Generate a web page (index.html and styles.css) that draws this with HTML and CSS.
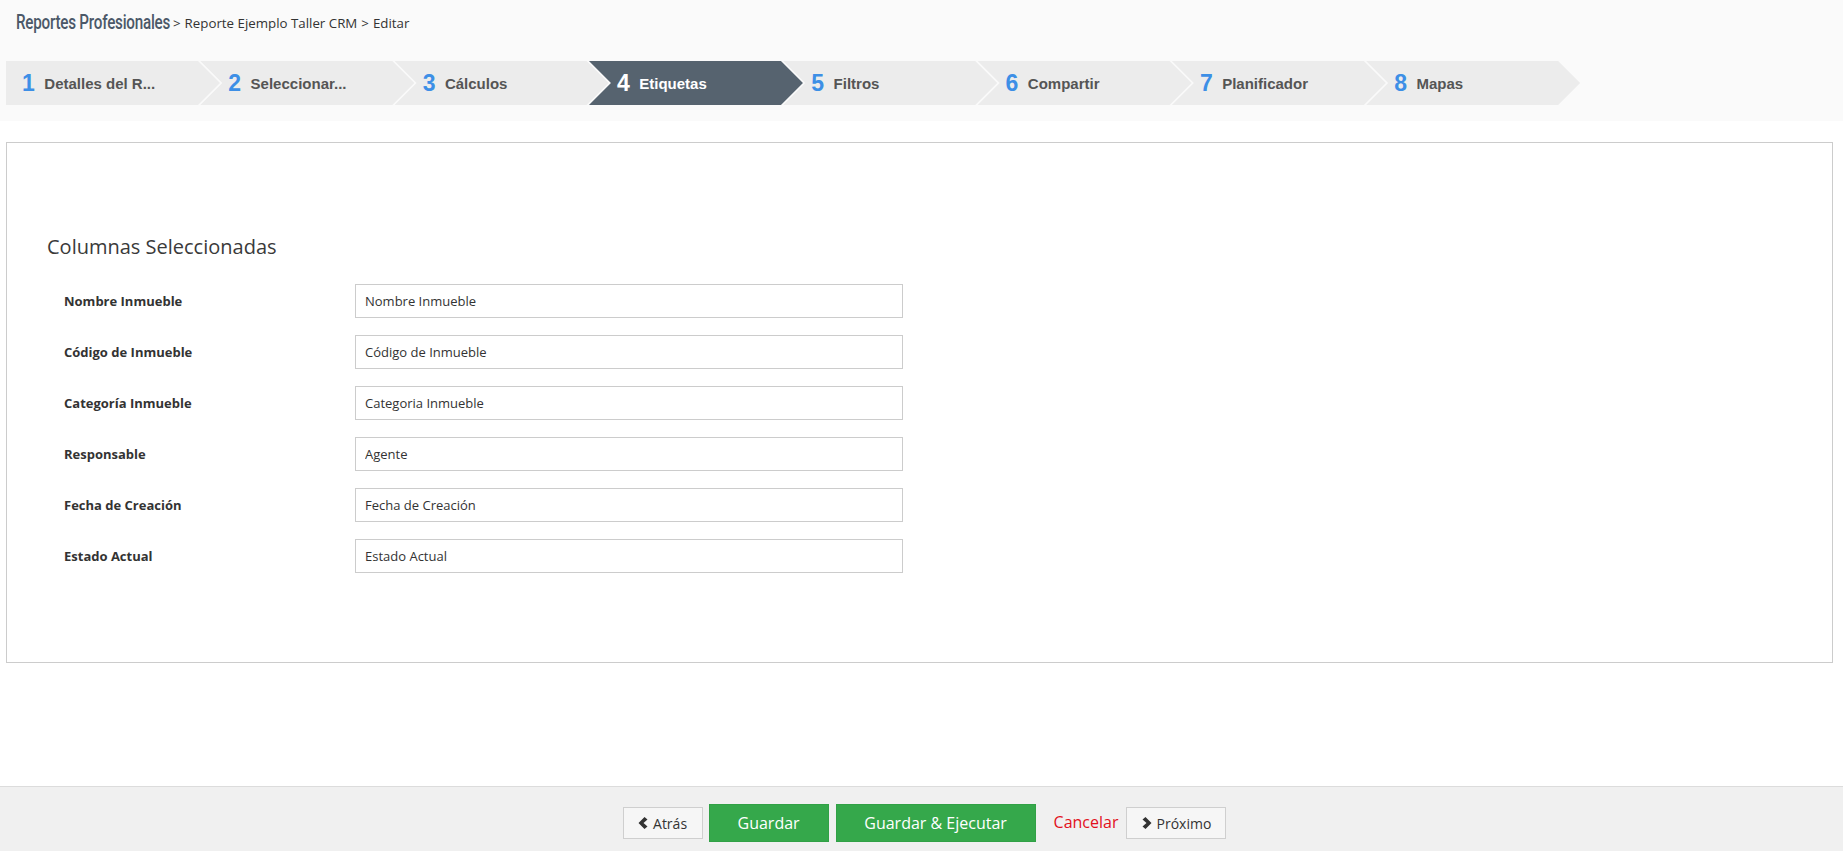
FILE: index.html
```html
<!DOCTYPE html>
<html lang="es">
<head>
<meta charset="utf-8">
<title>Reportes Profesionales - Editar</title>
<link rel="stylesheet" href="styles.css">
</head>
<body>
<div class="page">
  <header class="top">
    <nav class="crumbs">
      <span class="brand-box"><span class="brand">Reportes Profesionales</span></span>
      <span class="trail"><span class="sep">&gt;</span>Reporte Ejemplo Taller CRM<span class="sep">&gt;</span>Editar</span>
    </nav>
    <ol class="wizard">
      <li class="step first"><span class="num">1</span><span class="lbl">Detalles del R...</span></li>
      <li class="step"><span class="num">2</span><span class="lbl">Seleccionar...</span></li>
      <li class="step"><span class="num">3</span><span class="lbl">Cálculos</span></li>
      <li class="step active"><span class="num">4</span><span class="lbl">Etiquetas</span></li>
      <li class="step"><span class="num">5</span><span class="lbl">Filtros</span></li>
      <li class="step"><span class="num">6</span><span class="lbl">Compartir</span></li>
      <li class="step"><span class="num">7</span><span class="lbl">Planificador</span></li>
      <li class="step"><span class="num">8</span><span class="lbl">Mapas</span></li>
    </ol>
  </header>

  <main class="panel">
    <h2 class="title">Columnas Seleccionadas</h2>
    <div class="fields">
      <div class="field"><label>Nombre Inmueble</label><input type="text" value="Nombre Inmueble"></div>
      <div class="field"><label>Código de Inmueble</label><input type="text" value="Código de Inmueble"></div>
      <div class="field"><label>Categoría Inmueble</label><input type="text" value="Categoria Inmueble"></div>
      <div class="field"><label>Responsable</label><input type="text" value="Agente"></div>
      <div class="field"><label>Fecha de Creación</label><input type="text" value="Fecha de Creación"></div>
      <div class="field"><label>Estado Actual</label><input type="text" value="Estado Actual"></div>
    </div>
  </main>

  <footer class="actions">
    <div class="bar">
      <button class="btn btn-back"><svg class="chev" width="10" height="12" viewBox="0 0 10 12"><polygon points="6.5,0 9.5,2.5 5.5,6 9.5,9.5 6.5,12 0.5,6"/></svg>Atrás</button>
      <button class="btn btn-primary btn-save">Guardar</button>
      <button class="btn btn-primary btn-run">Guardar &amp; Ejecutar</button>
      <a class="cancel">Cancelar</a>
      <button class="btn btn-next"><svg class="chev" width="10" height="12" viewBox="0 0 10 12"><polygon points="3.5,0 0.5,2.5 4.5,6 0.5,9.5 3.5,12 9.5,6"/></svg>Próximo</button>
    </div>
  </footer>
</div>
</body>
</html>
```

FILE: styles.css
```css
html, body {
  margin: 0;
  padding: 0;
}

body {
  font-family: "Open Sans", "Liberation Sans", sans-serif;
  color: #333;
  background: #fff;
}

.page {
  display: flex;
  flex-direction: column;
  min-height: 100vh;
}

/* ---------- header ---------- */
.top {
  background: #fafafa;
  height: 121px;
  box-sizing: border-box;
  padding: 10px 0 0 6px;
}

.crumbs {
  display: flex;
  align-items: center;
  height: 24px;
  padding-left: 10px;
  font-size: 13.3px;
  color: #333;
}

.brand-box {
  display: block;
  width: 153px;
  height: 24px;
  flex: 0 0 153px;
}

.brand {
  display: inline-block;
  white-space: nowrap;
  font-family: Roboto, "Liberation Sans", sans-serif;
  font-size: 20px;
  line-height: 24px;
  font-weight: 500;
  color: #4b5868;
  letter-spacing: -0.3px;
  transform: scaleX(0.76);
  transform-origin: 0 50%;
}

.trail {
  line-height: 24px;
  padding-top: 2px;
  white-space: nowrap;
}

.sep {
  margin: 0 4px;
}

.wizard {
  list-style: none;
  margin: 27px 0 0;
  padding: 0;
  display: flex;
}

.step {
  flex: 0 0 214px;
  width: 214px;
  height: 44px;
  margin-right: -19.7px;
  box-sizing: border-box;
  padding-left: 28px;
  display: flex;
  align-items: center;
  background: #ececec;
  clip-path: polygon(0 0, calc(100% - 22px) 0, 100% 50%, calc(100% - 22px) 100%, 0 100%, 22px 50%);
  font-family: "Liberation Sans", Arial, sans-serif;
  font-weight: bold;
  white-space: nowrap;
}

.step.first {
  padding-left: 16px;
  clip-path: polygon(0 0, calc(100% - 22px) 0, 100% 50%, calc(100% - 22px) 100%, 0 100%);
}

.step.active {
  background: #56636f;
}

.num {
  font-size: 23px;
  color: #3d8fe6;
  margin-right: 9.5px;
}

.lbl {
  font-size: 15px;
  color: #555;
}

.step.active .num,
.step.active .lbl {
  color: #fff;
}

/* ---------- panel ---------- */
.panel {
  margin: 21px 10px 0 6px;
  border: 1px solid #cccccc;
  padding: 90px 40px 89px;
}

.title {
  margin: 0 0 23px;
  font-size: 20px;
  line-height: 28px;
  font-weight: 400;
  color: #3a3a3a;
}

.fields {
  display: flex;
  flex-direction: column;
  gap: 17px;
  padding-left: 17px;
}

.field {
  display: flex;
  align-items: center;
}

.field label {
  width: 291px;
  font-size: 13px;
  font-weight: 700;
  color: #333;
}

.field input {
  width: 548px;
  height: 34px;
  box-sizing: border-box;
  margin: 0;
  padding: 0 9px;
  border: 1px solid #cccccc;
  border-radius: 0;
  background: #fff;
  font-family: "Open Sans", "Liberation Sans", sans-serif;
  font-size: 13px;
  color: #333;
  outline: none;
}

/* ---------- footer ---------- */
.actions {
  margin-top: auto;
  height: 65px;
  box-sizing: border-box;
  border-top: 1px solid #dcdcdc;
  background: #f0f0f0;
  padding: 17px 0 0 6px;
  display: flex;
  justify-content: center;
}

.bar {
  display: flex;
  align-items: center;
  height: 38px;
}

.btn {
  height: 32px;
  box-sizing: border-box;
  margin: 0;
  padding: 0;
  display: inline-flex;
  align-items: center;
  justify-content: center;
  border: 1px solid #cfcfcf;
  border-radius: 0;
  background: #f6f6f6;
  color: #333;
  font-family: "Open Sans", "Liberation Sans", sans-serif;
  font-size: 14px;
  cursor: pointer;
}

.chev {
  fill: #333;
  margin-right: 5px;
}

.btn-back {
  width: 80px;
  margin-right: 6px;
}

.btn-next {
  width: 100px;
}

.btn-primary {
  height: 38px;
  border: 1px solid #31a146;
  background: #35a84b;
  color: #fff;
  font-size: 16px;
}

.btn-save {
  width: 120px;
  margin-right: 7px;
}

.btn-run {
  width: 200px;
}

.cancel {
  margin: 0 8px 0 18px;
  color: #e2101c;
  font-size: 16px;
  line-height: 22px;
  padding-bottom: 3px;
  cursor: pointer;
}
```
